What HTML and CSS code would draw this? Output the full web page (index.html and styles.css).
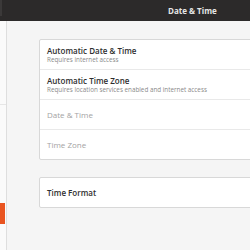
FILE: index.html
```html
<!DOCTYPE html>
<html lang="en">
<head>
  <meta charset="UTF-8" />
  <title>Date &amp; Time</title>
  <link rel="stylesheet" href="styles.css">
</head>
<body>
  <div class="window">
    <header class="headerbar">
      <div class="sidebar-head"><span class="btn-edge"></span></div>
      <div class="main-head"><span class="title">Date &amp; Time</span></div>
    </header>

    <div class="panes">
      <aside class="sidebar">
        <div class="side-group"></div>
        <div class="side-group rest">
          <div class="side-row selected"></div>
        </div>
      </aside>

      <main class="content">
        <div class="listbox">
          <div class="row">
            <div class="row-title">Automatic Date &amp; Time</div>
            <div class="row-sub">Requires internet access</div>
          </div>
          <div class="row">
            <div class="row-title">Automatic Time Zone</div>
            <div class="row-sub">Requires location services enabled and internet access</div>
          </div>
          <div class="row">
            <div class="row-label disabled">Date &amp; Time</div>
          </div>
          <div class="row">
            <div class="row-label disabled">Time Zone</div>
          </div>
        </div>

        <div class="listbox">
          <div class="row">
            <div class="row-label strong">Time Format</div>
          </div>
        </div>
      </main>
    </div>
  </div>
</body>
</html>
```

FILE: styles.css
```css
:root {
  --header: #2c2a2a;
  --bg: #f5f5f5;
  --border: #d8d8d8;
  --sep: #e9e9e9;
  --orange: #e95420;
  --text: #2e2e2e;
  --muted: #8a8a8a;
  --disabled: #a3a3a3;
}

html, body {
  margin: 0;
  padding: 0;
  width: 250px;
  height: 250px;
  overflow: hidden;
}

body {
  font-family: 'Open Sans', 'Noto Sans', sans-serif;
  color: var(--text);
  background: var(--bg);
}

.window {
  display: flex;
  flex-direction: column;
  height: 250px;
}

.headerbar {
  height: 21px;
  display: flex;
  background: var(--header);
  flex-shrink: 0;
}

.sidebar-head {
  width: 7px;
  display: flex;
}

.btn-edge {
  width: 2px;
  height: 16px;
  background: #3b3939;
}

.main-head {
  flex: 1;
  display: flex;
  align-items: center;
  padding-left: 161px;
}

.title {
  font-size: 8px;
  font-weight: 700;
  color: #e6e6e6;
  white-space: nowrap;
}

.panes {
  flex: 1;
  display: flex;
}

.sidebar {
  width: 6px;
  background: #fafafa;
  border-right: 1px solid #dedede;
  display: flex;
  flex-direction: column;
}

.side-group {
  height: 83px;
  border-bottom: 1px solid #e6e6e6;
}

.side-group.rest {
  height: auto;
  border-bottom: none;
  padding-top: 98px;
}

.side-row {
  height: 21px;
}

.side-row.selected {
  width: 5px;
  background: var(--orange);
}

.content {
  flex: 1;
  min-width: 0;
  overflow: hidden;
  padding: 18px 0 0 32px;
  display: flex;
  flex-direction: column;
  gap: 17px;
}

.listbox {
  width: 400px;
  flex-shrink: 0;
  background: #fff;
  border: 1px solid var(--border);
  border-radius: 2px;
}

.row {
  height: 29px;
  padding-left: 7px;
  display: flex;
  flex-direction: column;
  justify-content: center;
  border-top: 1px solid var(--sep);
}

.row:first-child {
  border-top: none;
}

.row-title {
  font-size: 8px;
  font-weight: 600;
  line-height: 10px;
  white-space: nowrap;
}

.row-sub {
  font-size: 6.3px;
  line-height: 8px;
  color: var(--muted);
  white-space: nowrap;
}

.row-label {
  font-size: 8px;
  white-space: nowrap;
}

.row-label.disabled {
  color: var(--disabled);
}

.row-label.strong {
  font-weight: 600;
}
```
